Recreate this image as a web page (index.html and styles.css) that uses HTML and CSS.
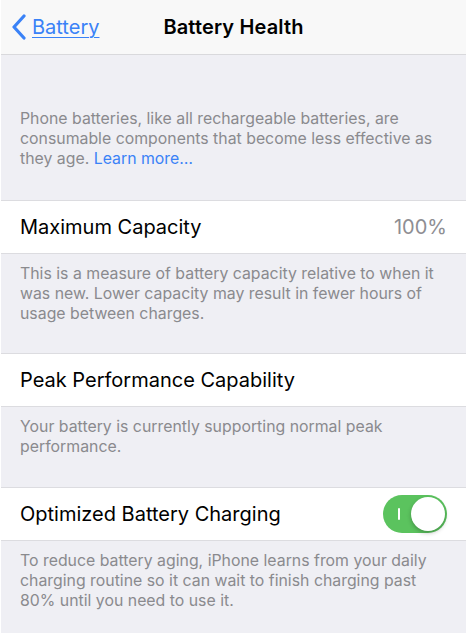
FILE: index.html
```html
<!DOCTYPE html>
<html>
<head>
<meta charset="utf-8">
<link rel="stylesheet" href="styles.css">
</head>
<body>
<div class="screen">
  <header class="nav">
    <a class="back">
      <svg class="chev" width="16" height="26" viewBox="0 0 16 26"><path d="M13 2 L3 13 L13 24" fill="none" stroke="#3a82f7" stroke-width="3.2" stroke-linecap="round" stroke-linejoin="round"/></svg>
      <span class="back-label">Battery</span>
    </a>
    <h1 class="title">Battery Health</h1>
  </header>
  <p class="note note-first">Phone batteries, like all rechargeable batteries, are consumable components that become less effective as they age. <span class="link">Learn more…</span></p>
  <div class="row"><span class="label">Maximum Capacity</span><span class="value">100%</span></div>
  <p class="note note-tight">This is a measure of battery capacity relative to when it was new. Lower capacity may result in fewer hours of usage between charges.</p>
  <div class="row"><span class="label">Peak Performance Capability</span></div>
  <p class="note">Your battery is currently supporting normal peak performance.</p>
  <div class="row"><span class="label">Optimized Battery Charging</span>
    <span class="toggle"><span class="tick"></span><span class="knob"></span></span>
  </div>
  <p class="note">To reduce battery aging, iPhone learns from your daily charging routine so it can wait to finish charging past 80% until you need to use it.</p>
</div>
</body>
</html>
```
FILE: styles.css
```css
html, body { margin: 0; padding: 0; background: #fff; }
body { font-family: Inter, "Liberation Sans", sans-serif; }
.screen {
  margin: 0 1px;
  height: 633px;
  background: #efeff4;
  overflow: hidden;
}
.nav {
  height: 54px;
  background: #f8f8f8;
  border-bottom: 1px solid #d9d9dc;
  display: flex;
  align-items: center;
  position: relative;
}
.back {
  display: flex;
  align-items: center;
  gap: 5px;
  padding-left: 10px;
  color: #3a82f7;
  z-index: 1;
}
.back-label {
  font-size: 20px;
  text-decoration: underline;
  text-underline-offset: 3px;
  text-decoration-thickness: 1px;
}
.title {
  position: absolute;
  left: 0; right: 0;
  margin: 0;
  text-align: center;
  font-size: 20px;
  font-weight: 600;
  color: #000;
  letter-spacing: 0.15px;
}
.note {
  margin: 0;
  padding: 10px 18px 30px 19px;
  font-size: 15.85px;
  line-height: 20px;
  color: #8a8a8e;
}
.note-first { padding-top: 54px; padding-bottom: 31px; }
.note-tight { padding-bottom: 29px; }
.link { color: #3a82f7; }
.row {
  height: 52px;
  background: #fff;
  border-top: 1px solid #dcdce0;
  border-bottom: 1px solid #dcdce0;
  display: flex;
  align-items: center;
  justify-content: space-between;
  padding: 0 19px 0 19px;
}
.label { font-size: 20px; color: #000; }
.value { font-size: 20px; color: #8e8e93; }
.toggle {
  width: 64px;
  height: 38px;
  border-radius: 19px;
  background: #5bc35e;
  position: relative;
}
.tick {
  position: absolute;
  left: 15px; top: 13px;
  width: 2px; height: 12px;
  background: #fff;
  border-radius: 1px;
}
.knob {
  position: absolute;
  right: 2px; top: 2px;
  width: 34px; height: 34px;
  border-radius: 50%;
  background: #fff;
  box-shadow: 0 2px 4px rgba(0,0,0,0.25);
}
```
